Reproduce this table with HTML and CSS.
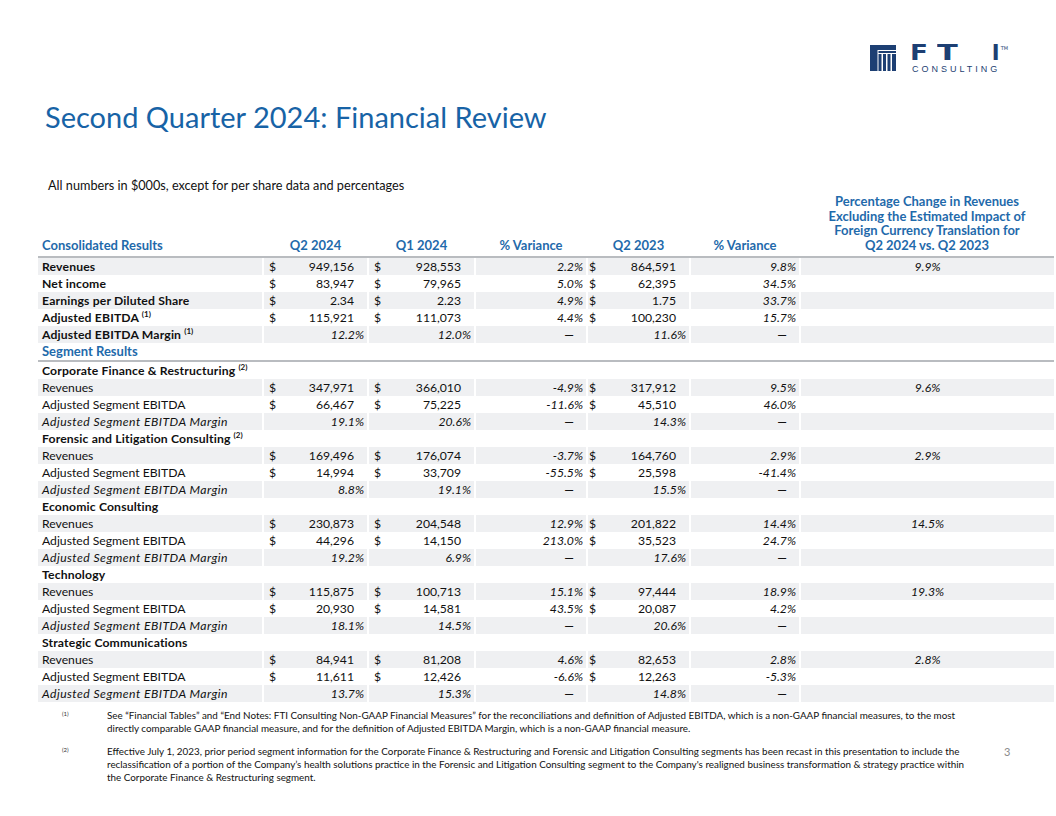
FILE: index.html
```html
<!DOCTYPE html>
<html lang="en">
<head>
<meta charset="utf-8">
<title>Second Quarter 2024: Financial Review</title>
<link rel="stylesheet" href="styles.css">
</head>
<body>
<div class="slide">
  <div class="brand">
    <svg class="mark" viewBox="0 0 26 26" width="26" height="26" aria-hidden="true">
      <rect x="0" y="0" width="26" height="5" fill="#1d3f73"/>
      <rect x="0" y="5" width="7.5" height="21" fill="#1d3f73"/>
      <rect x="8.5" y="6" width="17.5" height="2" fill="#1d3f73"/>
      <rect x="8.5" y="9" width="3" height="17" fill="#1d3f73"/>
      <rect x="13" y="9" width="3" height="17" fill="#1d3f73"/>
      <rect x="17.5" y="9" width="3" height="17" fill="#1d3f73"/>
      <rect x="22" y="9" width="4" height="17" fill="#1d3f73"/>
    </svg>
    <div class="word">
      <div class="fti"><span class="l-f">F</span><span class="l-t">T</span><span class="l-i">I</span><span class="tm">TM</span></div>
      <div class="consult">CONSULTING</div>
    </div>
  </div>

  <h1 class="title">Second Quarter 2024: Financial Review</h1>
  <p class="basis">All numbers in $000s, except for per share data and percentages</p>

  <table class="fin">
    <colgroup>
      <col class="c-lbl"><col class="c-q1"><col class="c-q2"><col class="c-v1"><col class="c-q3"><col class="c-v2"><col class="c-fx">
    </colgroup>
    <thead>
      <tr>
        <th class="lbl">Consolidated Results</th>
        <th>Q2 2024</th>
        <th>Q1 2024</th>
        <th>% Variance</th>
        <th>Q2 2023</th>
        <th>% Variance</th>
        <th>Percentage Change in Revenues<br>Excluding the Estimated Impact of<br>Foreign Currency Translation for<br>Q2 2024 vs. Q2 2023</th>
      </tr>
    </thead>
    <tbody>
      <tr class="sh b">
        <td class="lbl">Revenues</td>
        <td class="n"><span class="d">$</span>949,156</td><td class="n"><span class="d">$</span>928,553</td>
        <td class="p">2.2%</td><td class="n n3"><span class="d">$</span>864,591</td><td class="p">9.8%</td><td class="fx">9.9%</td>
      </tr>
      <tr class="b">
        <td class="lbl">Net income</td>
        <td class="n"><span class="d">$</span>83,947</td><td class="n"><span class="d">$</span>79,965</td>
        <td class="p">5.0%</td><td class="n n3"><span class="d">$</span>62,395</td><td class="p">34.5%</td><td class="fx"></td>
      </tr>
      <tr class="sh b">
        <td class="lbl">Earnings per Diluted Share</td>
        <td class="n"><span class="d">$</span>2.34</td><td class="n"><span class="d">$</span>2.23</td>
        <td class="p">4.9%</td><td class="n n3"><span class="d">$</span>1.75</td><td class="p">33.7%</td><td class="fx"></td>
      </tr>
      <tr class="b">
        <td class="lbl">Adjusted EBITDA <sup>(1)</sup></td>
        <td class="n"><span class="d">$</span>115,921</td><td class="n"><span class="d">$</span>111,073</td>
        <td class="p">4.4%</td><td class="n n3"><span class="d">$</span>100,230</td><td class="p">15.7%</td><td class="fx"></td>
      </tr>
      <tr class="sh b">
        <td class="lbl">Adjusted EBITDA Margin <sup>(1)</sup></td>
        <td class="p">12.2%</td><td class="p">12.0%</td>
        <td class="dash">—</td><td class="p">11.6%</td><td class="dash">—</td><td class="fx"></td>
      </tr>
      <tr class="seg">
        <td class="lbl">Segment Results</td><td></td><td></td><td></td><td></td><td></td><td></td>
      </tr>

      <tr class="b">
        <td class="lbl">Corporate Finance &amp; Restructuring <sup>(2)</sup></td><td></td><td></td><td></td><td></td><td></td><td></td>
      </tr>
      <tr class="sh">
        <td class="lbl">Revenues</td>
        <td class="n"><span class="d">$</span>347,971</td><td class="n"><span class="d">$</span>366,010</td>
        <td class="p">-4.9%</td><td class="n n3"><span class="d">$</span>317,912</td><td class="p">9.5%</td><td class="fx">9.6%</td>
      </tr>
      <tr>
        <td class="lbl">Adjusted Segment EBITDA</td>
        <td class="n"><span class="d">$</span>66,467</td><td class="n"><span class="d">$</span>75,225</td>
        <td class="p">-11.6%</td><td class="n n3"><span class="d">$</span>45,510</td><td class="p">46.0%</td><td class="fx"></td>
      </tr>
      <tr class="sh">
        <td class="lbl i">Adjusted Segment EBITDA Margin</td>
        <td class="p">19.1%</td><td class="p">20.6%</td>
        <td class="dash">—</td><td class="p">14.3%</td><td class="dash">—</td><td class="fx"></td>
      </tr>

      <tr class="b">
        <td class="lbl">Forensic and Litigation Consulting <sup>(2)</sup></td><td></td><td></td><td></td><td></td><td></td><td></td>
      </tr>
      <tr class="sh">
        <td class="lbl">Revenues</td>
        <td class="n"><span class="d">$</span>169,496</td><td class="n"><span class="d">$</span>176,074</td>
        <td class="p">-3.7%</td><td class="n n3"><span class="d">$</span>164,760</td><td class="p">2.9%</td><td class="fx">2.9%</td>
      </tr>
      <tr>
        <td class="lbl">Adjusted Segment EBITDA</td>
        <td class="n"><span class="d">$</span>14,994</td><td class="n"><span class="d">$</span>33,709</td>
        <td class="p">-55.5%</td><td class="n n3"><span class="d">$</span>25,598</td><td class="p">-41.4%</td><td class="fx"></td>
      </tr>
      <tr class="sh">
        <td class="lbl i">Adjusted Segment EBITDA Margin</td>
        <td class="p">8.8%</td><td class="p">19.1%</td>
        <td class="dash">—</td><td class="p">15.5%</td><td class="dash">—</td><td class="fx"></td>
      </tr>

      <tr class="b">
        <td class="lbl">Economic Consulting</td><td></td><td></td><td></td><td></td><td></td><td></td>
      </tr>
      <tr class="sh">
        <td class="lbl">Revenues</td>
        <td class="n"><span class="d">$</span>230,873</td><td class="n"><span class="d">$</span>204,548</td>
        <td class="p">12.9%</td><td class="n n3"><span class="d">$</span>201,822</td><td class="p">14.4%</td><td class="fx">14.5%</td>
      </tr>
      <tr>
        <td class="lbl">Adjusted Segment EBITDA</td>
        <td class="n"><span class="d">$</span>44,296</td><td class="n"><span class="d">$</span>14,150</td>
        <td class="p">213.0%</td><td class="n n3"><span class="d">$</span>35,523</td><td class="p">24.7%</td><td class="fx"></td>
      </tr>
      <tr class="sh">
        <td class="lbl i">Adjusted Segment EBITDA Margin</td>
        <td class="p">19.2%</td><td class="p">6.9%</td>
        <td class="dash">—</td><td class="p">17.6%</td><td class="dash">—</td><td class="fx"></td>
      </tr>

      <tr class="b">
        <td class="lbl">Technology</td><td></td><td></td><td></td><td></td><td></td><td></td>
      </tr>
      <tr class="sh">
        <td class="lbl">Revenues</td>
        <td class="n"><span class="d">$</span>115,875</td><td class="n"><span class="d">$</span>100,713</td>
        <td class="p">15.1%</td><td class="n n3"><span class="d">$</span>97,444</td><td class="p">18.9%</td><td class="fx">19.3%</td>
      </tr>
      <tr>
        <td class="lbl">Adjusted Segment EBITDA</td>
        <td class="n"><span class="d">$</span>20,930</td><td class="n"><span class="d">$</span>14,581</td>
        <td class="p">43.5%</td><td class="n n3"><span class="d">$</span>20,087</td><td class="p">4.2%</td><td class="fx"></td>
      </tr>
      <tr class="sh">
        <td class="lbl i">Adjusted Segment EBITDA Margin</td>
        <td class="p">18.1%</td><td class="p">14.5%</td>
        <td class="dash">—</td><td class="p">20.6%</td><td class="dash">—</td><td class="fx"></td>
      </tr>

      <tr class="b">
        <td class="lbl">Strategic Communications</td><td></td><td></td><td></td><td></td><td></td><td></td>
      </tr>
      <tr class="sh">
        <td class="lbl">Revenues</td>
        <td class="n"><span class="d">$</span>84,941</td><td class="n"><span class="d">$</span>81,208</td>
        <td class="p">4.6%</td><td class="n n3"><span class="d">$</span>82,653</td><td class="p">2.8%</td><td class="fx">2.8%</td>
      </tr>
      <tr>
        <td class="lbl">Adjusted Segment EBITDA</td>
        <td class="n"><span class="d">$</span>11,611</td><td class="n"><span class="d">$</span>12,426</td>
        <td class="p">-6.6%</td><td class="n n3"><span class="d">$</span>12,263</td><td class="p">-5.3%</td><td class="fx"></td>
      </tr>
      <tr class="sh">
        <td class="lbl i">Adjusted Segment EBITDA Margin</td>
        <td class="p">13.7%</td><td class="p">15.3%</td>
        <td class="dash">—</td><td class="p">14.8%</td><td class="dash">—</td><td class="fx"></td>
      </tr>
    </tbody>
  </table>

  <div class="notes">
    <span class="mk">(1)</span>
    <p class="nt">See “Financial Tables” and “End Notes: FTI Consulting Non-GAAP Financial Measures” for the reconciliations and definition of Adjusted EBITDA, which is a non-GAAP financial measures, to the most<br>directly comparable GAAP financial measure, and for the definition of Adjusted EBITDA Margin, which is a non-GAAP financial measure.</p>
    <span class="pg"></span>
    <span class="mk">(2)</span>
    <p class="nt">Effective July 1, 2023, prior period segment information for the Corporate Finance &amp; Restructuring and Forensic and Litigation Consulting segments has been recast in this presentation to include the<br>reclassification of a portion of the Company’s health solutions practice in the Forensic and Litigation Consulting segment to the Company's realigned business transformation &amp; strategy practice within<br>the Corporate Finance &amp; Restructuring segment.</p>
    <span class="pg">3</span>
  </div>
</div>
</body>
</html>
```

FILE: styles.css
```css
html, body {
  margin: 0;
  padding: 0;
  background: #ffffff;
}

.slide {
  width: 1056px;
  height: 816px;
  overflow: hidden;
  font-family: Lato, "Open Sans", sans-serif;
  color: #111111;
}

/* ---------- brand ---------- */
.brand {
  display: flex;
  justify-content: flex-end;
  align-items: flex-start;
  gap: 14px;
  height: 75px;
  padding: 45px 48px 0 0;
  box-sizing: border-box;
}
.mark {
  display: block;
  flex: none;
}
.word {
  display: flex;
  flex-direction: column;
  width: 98px;
  color: #1d3f73;
}
.fti {
  display: flex;
  align-items: flex-start;
  font-family: "DejaVu Sans", sans-serif;
  font-weight: bold;
  font-size: 21px;
  line-height: 16px;
  height: 17px;
}
.l-f { width: 28px; transform: scaleX(1.25); transform-origin: left center; }
.l-t { width: 57px; transform: scaleX(1.45); transform-origin: left center; }
.l-i { width: 8px; }
.tm {
  font-size: 5px;
  line-height: 6px;
  font-weight: normal;
  margin-left: 1px;
}
.consult {
  font-family: "Liberation Sans", sans-serif;
  font-size: 9px;
  letter-spacing: 3px;
  line-height: 10px;
  margin: 2px 0 0 2px;
}

/* ---------- headings ---------- */
.title {
  margin: 24px 0 0 45px;
  font-size: 29px;
  line-height: 35px;
  font-weight: normal;
  color: #1763a6;
}
.basis {
  margin: 43px 0 0 48px;
  font-size: 12.7px;
  line-height: 16px;
  color: #111111;
}

/* ---------- table ---------- */
.fin {
  margin: 1px 0 0 38px;
  border-collapse: collapse;
  table-layout: fixed;
  width: 1016px;
  font-size: 12.2px;
}
.c-lbl { width: 225px; }
.c-q1 { width: 105px; }
.c-q2 { width: 107px; }
.c-v1 { width: 112px; }
.c-q3 { width: 103px; }
.c-v2 { width: 110px; }
.c-fx { width: 254px; }

.fin th {
  color: #1f6aab;
  font-size: 13px;
  font-weight: bold;
  line-height: 14.5px;
  vertical-align: bottom;
  text-align: center;
  padding: 0 0 4px 0;
  border-bottom: 2px solid #b9bcc0;
}
.fin th.lbl {
  text-align: left;
  padding-left: 4px;
}

.fin td {
  height: 17px;
  padding: 0;
  line-height: 17px;
  white-space: nowrap;
  border-left: 2px solid #ffffff;
}
.fin td.lbl {
  border-left: 0;
  padding-left: 4px;
}
.fin tr.sh td {
  background: #eff0f2;
}
.fin tr.b td.lbl {
  font-weight: bold;
  letter-spacing: 0.15px;
}
.fin td.i {
  font-style: italic;
  letter-spacing: 0.45px;
}
.fin sup {
  font-size: 8px;
  line-height: 0;
  vertical-align: 5px;
  font-weight: bold;
  letter-spacing: 0;
}

.fin td.n {
  text-align: right;
  padding-right: 13px;
}
.fin td.n .d {
  float: left;
  padding-left: 5px;
}
.fin td.n3 .d {
  padding-left: 1px;
}
.fin td.p {
  text-align: right;
  padding-right: 3px;
  font-style: italic;
}
.fin td.dash {
  text-align: right;
  padding-right: 12px;
}
.fin td.fx {
  text-align: center;
  font-style: italic;
}

.fin tr.seg td {
  height: 15px;
  border-bottom: 2px solid #b9bcc0;
}
.fin tr.seg td.lbl {
  color: #1f6aab;
  font-size: 13px;
  font-weight: bold;
}

/* ---------- footnotes ---------- */
.notes {
  display: grid;
  grid-template-columns: 45px 1fr 56px;
  row-gap: 10px;
  margin: 7px 0 0 62px;
  font-size: 9.85px;
  line-height: 13px;
}
.mk {
  font-size: 6px;
  line-height: 10px;
  color: #333333;
}
.nt {
  margin: 0;
  white-space: nowrap;
}
.pg {
  font-size: 11px;
  line-height: 13px;
  color: #8a8a8a;
  padding-left: 4px;
}
```
